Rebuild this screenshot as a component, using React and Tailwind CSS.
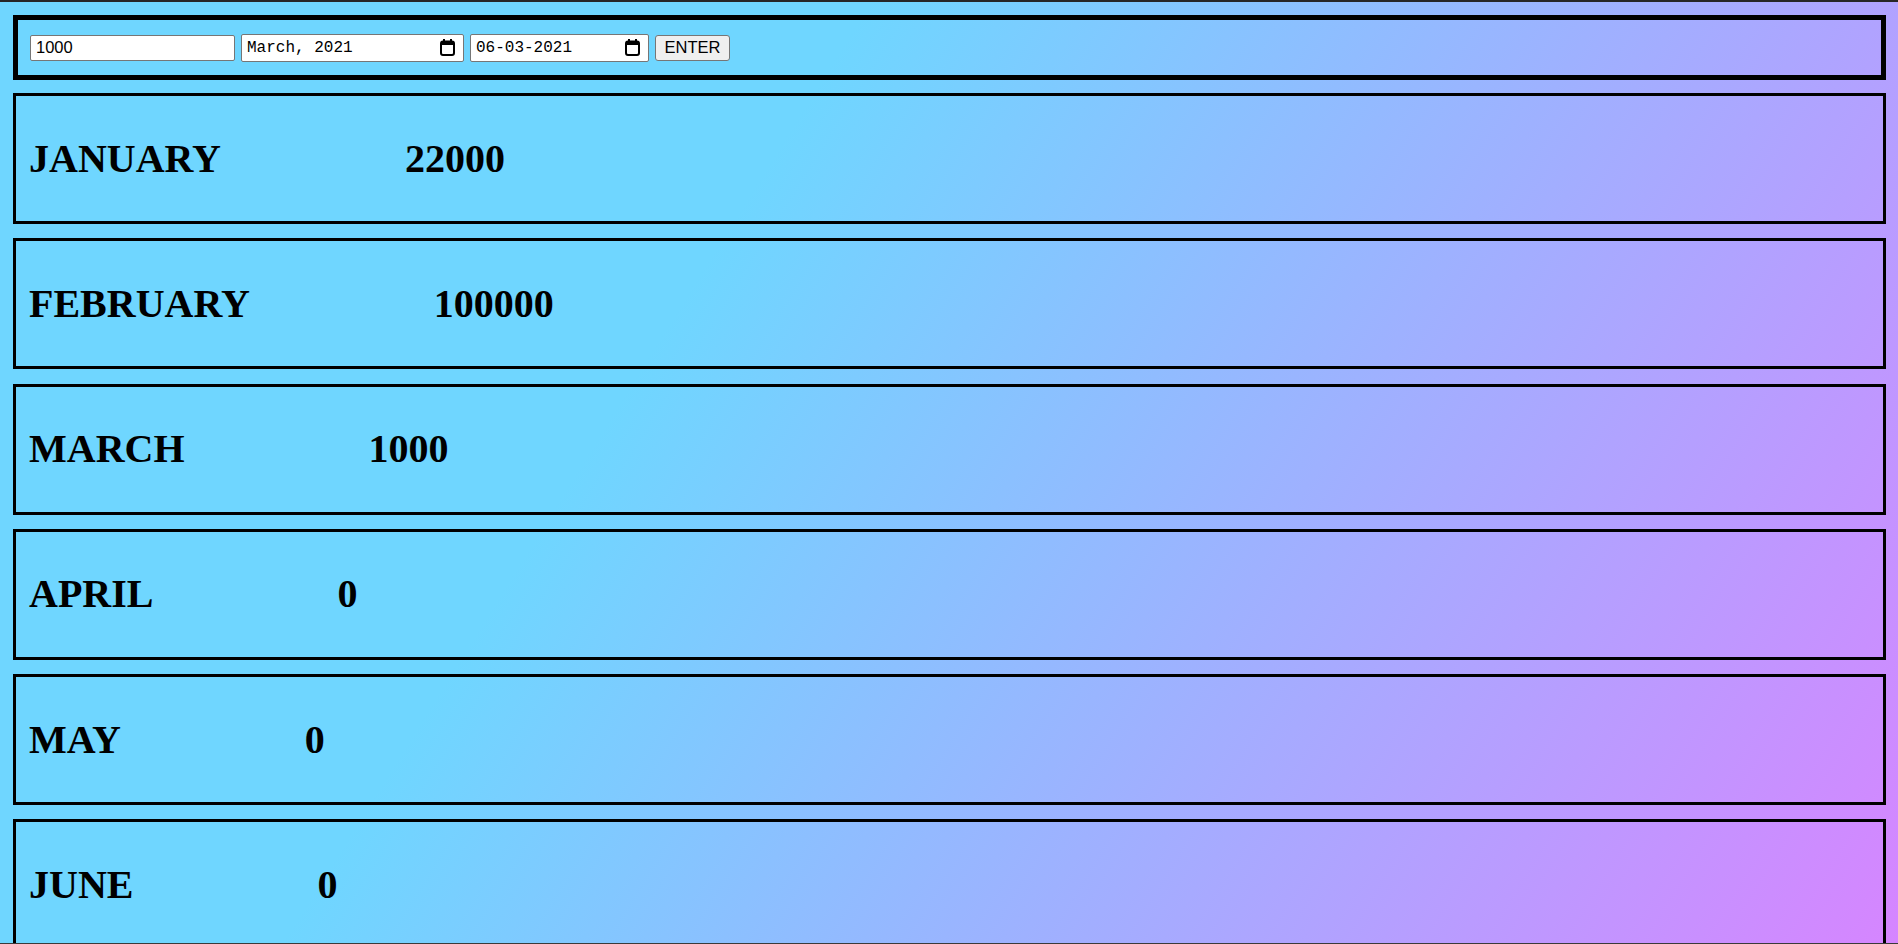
import React from 'react'

const months = [
  { name: 'JANUARY', amount: '22000' },
  { name: 'FEBRUARY', amount: '100000' },
  { name: 'MARCH', amount: '1000' },
  { name: 'APRIL', amount: '0' },
  { name: 'MAY', amount: '0' },
  { name: 'JUNE', amount: '0' },
]

function CalendarIcon() {
  return (
    <svg width="15" height="17" viewBox="0 0 15 17" className="shrink-0">
      <rect x="3" y="0" width="2" height="3" fill="#000" />
      <rect x="10" y="0" width="2" height="3" fill="#000" />
      <rect x="1" y="2.5" width="13" height="13.5" rx="2" fill="none" stroke="#000" strokeWidth="2" />
      <rect x="1" y="2.5" width="13" height="3.5" fill="#000" />
    </svg>
  )
}

function DateBox({ value, width }) {
  return (
    <div
      className={`${width} h-[28px] bg-white border border-[#767676] rounded-[2px] flex items-center justify-between pl-[5px] pr-[8px] text-[16px] text-black`}
      style={{ fontFamily: '"Liberation Mono", "DejaVu Sans Mono", monospace' }}
    >
      <span>{value}</span>
      <CalendarIcon />
    </div>
  )
}

export default function App() {
  return (
    <div className="h-screen flex flex-col overflow-hidden" style={{ fontFamily: '"Liberation Serif", "Times New Roman", serif' }}>
      <div className="h-[2px] bg-[#262626] shrink-0" />

      <div className="flex-1 overflow-hidden bg-[linear-gradient(122deg,#6fd6ff_35%,#d685ff_100%)] pt-[13px] pl-[13px] pr-[12px]">
        {/* Input bar */}
        <div
          className="h-[65px] border-[5px] border-black flex items-center gap-[6px] pl-[12px]"
          style={{ fontFamily: '"Liberation Sans", Arial, sans-serif' }}
        >
          <div className="w-[205px] h-[26px] bg-white border border-[#767676] rounded-[2px] flex items-center pl-[5px] text-[16.5px] text-black">
            1000
          </div>
          <DateBox value="March, 2021" width="w-[223px]" />
          <DateBox value="06-03-2021" width="w-[179px]" />
          <button className="w-[75px] h-[26px] bg-[#efefef] border border-[#767676] rounded-[3px] text-[16.5px] text-black flex items-center justify-center">
            ENTER
          </button>
        </div>

        {/* Month rows */}
        <div className="flex flex-col gap-[14.3px] mt-[13px]">
          {months.map(m => (
            <div key={m.name} className="h-[131px] shrink-0 border-[3px] border-black flex items-center pl-[13px]">
              <span className="text-[40px] font-bold text-black">{m.name}</span>
              <span className="text-[40px] font-bold text-black ml-[184px]">{m.amount}</span>
            </div>
          ))}
        </div>
      </div>

      <div className="h-px bg-[#3a3a3a] shrink-0" />
    </div>
  )
}
